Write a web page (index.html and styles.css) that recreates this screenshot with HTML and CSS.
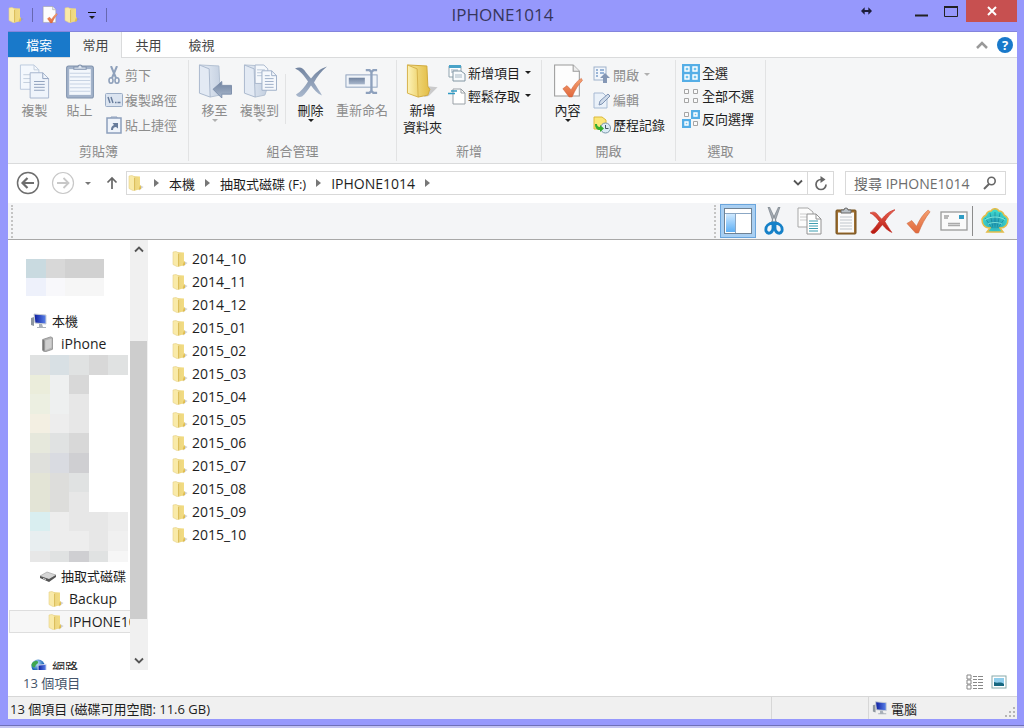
FILE: index.html
```html
<!DOCTYPE html>
<html lang="zh-Hant">
<head>
  <meta charset="UTF-8" />
  <title>IPHONE1014</title>
  <link rel="stylesheet" href="styles.css">
</head>
<body>

<!-- Icon sprite -->
<svg class="sprite" width="0" height="0" aria-hidden="true">
  <defs>
    <linearGradient id="gYellow"><stop offset="0" stop-color="#f7e79a"/><stop offset="1" stop-color="#e3bd45"/></linearGradient>
    <linearGradient id="gFlap"><stop offset="0" stop-color="#fdf3b8"/><stop offset="1" stop-color="#efd676"/></linearGradient>
    <linearGradient id="gSmall"><stop offset="0" stop-color="#e9d27c"/><stop offset="1" stop-color="#f3dd84"/></linearGradient>
    <linearGradient id="gGrey"><stop offset="0" stop-color="#e9eff7"/><stop offset="1" stop-color="#c3cfe0"/></linearGradient>
    <linearGradient id="gSteel" x2="0" y2="1"><stop offset="0" stop-color="#71839f"/><stop offset="1" stop-color="#a9b8cd"/></linearGradient>
    <linearGradient id="gScreen"><stop offset="0" stop-color="#0a1a9c"/><stop offset="1" stop-color="#5b83ea"/></linearGradient>
    <linearGradient id="gPane" x2="0" y2="1"><stop offset="0" stop-color="#cfe9ff"/><stop offset="1" stop-color="#5fb0f5"/></linearGradient>
    <linearGradient id="gCheck" x2="0" y2="1"><stop offset="0" stop-color="#f5a070"/><stop offset="1" stop-color="#e0683c"/></linearGradient>
    <linearGradient id="gRed" x2="0" y2="1"><stop offset="0" stop-color="#e8604e"/><stop offset="1" stop-color="#b51710"/></linearGradient>
    <radialGradient id="gShell" cy=".6"><stop offset="0" stop-color="#2093b4"/><stop offset="1" stop-color="#3fd8cc"/></radialGradient>
    <radialGradient id="gGlobe" cx=".4" cy=".3"><stop offset="0" stop-color="#c8ecff"/><stop offset="1" stop-color="#1c66b8"/></radialGradient>
  </defs>

  <symbol id="folder" viewBox="0 0 34 36">
    <path d="M22 23l10 1-9 9-5 1z" fill="#8a8a8a" opacity=".4"/>
    <path d="M1 1l20 1 1 21 2 3-2 6-10 2z" fill="url(#gYellow)" stroke="#cfa93c"/>
    <path d="M1 1l10 4 1 29-11-4z" fill="url(#gFlap)" stroke="#d6b24a"/>
  </symbol>
  <symbol id="folder-sm" viewBox="0 0 16 16">
    <path d="M11 9.500l4.500 2.500-4.500 3.500z" fill="#999" opacity=".45"/>
    <path d="M3 1l9 .5v8.500l1 1v3l-6 1.500z" fill="url(#gSmall)"/>
    <path d="M1 1l3-.5 3 1.500v13.500l-1.500.3L1 13.500z" fill="#f9eaa8" stroke="#e6d088" stroke-width=".6"/>
    <path d="M6 2.500l1 .5v12.500l-1-.5z" fill="#dcbf5c"/>
    <path d="M12 10.500l1 1v2.500l-2.500.8z" fill="#e0bd50"/>
  </symbol>
  <symbol id="moveto" viewBox="0 0 34 36">
    <path d="M1 1l20 1 1 21 2 3-2 6-10 2z" fill="url(#gGrey)" stroke="#b3c0d2"/>
    <path d="M1 1l10 4 1 29-11-4z" fill="#e3eaf4" stroke="#a9b8cc"/>
    <path d="M15 26l9-8v4h10v9H24v4z" fill="url(#gSteel)" stroke="#7e90ab"/>
  </symbol>
  <symbol id="copyto" viewBox="0 0 34 36">
    <path d="M1 1l20 1 1 21 2 3-2 6-10 2z" fill="url(#gGrey)" stroke="#b3c0d2"/>
    <path d="M12 1h9l4 4v15H12z" fill="#f5f8fc" stroke="#a9b8cc"/>
    <path d="M14 6h8M14 9h8M14 12h8" stroke="#b9c6d8"/>
    <path d="M1 1l10 4 1 29-11-4z" fill="#e3eaf4" stroke="#a9b8cc"/>
    <path d="M19 7h10l5 5v15H19z" fill="#f5f8fc" stroke="#9fb0c8"/>
    <path d="M29 7v5h5M22 12h5M22 15h9M22 18h9M22 21h9M22 24h9" fill="none" stroke="#9fb0c8"/>
  </symbol>
  <symbol id="copy" viewBox="0 0 32 36">
    <path d="M1 1h14l5 5v20H1z" fill="#f4f8fd" stroke="#bccade"/>
    <path d="M15 1v5h5M4 11h9M4 15h8M4 19h8" fill="none" stroke="#c3cedd"/>
    <path d="M11 9h13l6 6v20H11z" fill="#eff4fb" stroke="#a6b5cd"/>
    <path d="M24 9v6h6M15 18h11M15 21h11M15 24h11M15 27h11" fill="none" stroke="#8fa1bd"/>
  </symbol>
  <symbol id="paste" viewBox="0 0 28 34">
    <rect x="1" y="2" width="26" height="31" rx="2" fill="#a3b3ca" stroke="#8193ae"/>
    <path d="M3.500 5h21v25h-21z" fill="#f3f7fc"/>
    <path d="M4 9h20M4 12.500h20M4 16h20M4 19.500h20M4 23h20M4 26.500h20" stroke="#c7d3e3"/>
    <path d="M8 5V3h4a2 2 0 014 0h4v2z" fill="#dde5ef" stroke="#8193ae"/>
  </symbol>
  <symbol id="cut" viewBox="0 0 16 18">
    <path d="M5 0l5 12M11 0L6 12" stroke="#8fa1bb" stroke-width="2"/>
    <ellipse cx="5" cy="14.500" rx="2" ry="2.700" fill="none" stroke="#8fa1bb" stroke-width="1.600"/>
    <ellipse cx="11" cy="14.500" rx="2" ry="2.700" fill="none" stroke="#8fa1bb" stroke-width="1.600"/>
  </symbol>
  <symbol id="path" viewBox="0 0 18 14">
    <rect x=".5" y=".5" width="17" height="13" rx="1" fill="#dbe4f0" stroke="#9badc6"/>
    <path d="M3 4l2 6M6 4l2 6M10 9.500h1.500M12.500 9.500h3" stroke="#667b9b" stroke-width="1.400"/>
  </symbol>
  <symbol id="shortcut" viewBox="0 0 16 18">
    <rect x="1" y="2" width="14" height="15" fill="#eef3fa" stroke="#8c9fbc" stroke-width="1.500"/>
    <path d="M5 2V1h6v1" stroke="#8c9fbc" fill="none"/>
    <path d="M5 14c0-3 1-4 3-5L6.500 7H12v5.500L10 11c-2 0-3 1-3 3z" fill="#667b9b"/>
  </symbol>
  <symbol id="delete" viewBox="0 0 34 32">
    <path d="M1 3c5-2 8-1 11 4l5 6C21 8 26 3 33 1c-6 5-10 10-13 16 3 5 6 9 8 13-5-2-8-6-11-10C14 24 11 29 8 31c-3 1-5 0-6-2 5-3 9-8 12-13C10 10 6 5 1 3z" fill="url(#gSteel)"/>
  </symbol>
  <symbol id="rename" viewBox="0 0 36 28">
    <rect x="1" y="7" width="33" height="13" fill="#f0f4f9" stroke="#8ea1bd"/>
    <rect x="4" y="10" width="17" height="7" fill="url(#gSteel)"/>
    <path d="M22 2h4l2 2 2-2h4M28 4v20M22 26h4l2-2 2 2h4" fill="none" stroke="#8ea1bd" stroke-width="2.500"/>
  </symbol>
  <symbol id="newitem" viewBox="0 0 18 18">
    <path d="M1 2h12v11H1z" fill="#fff" stroke="#8fa3ae"/>
    <path d="M1 1h12v3H1z" fill="#4aa3c8"/>
    <path d="M3 6h7M3 8h7" stroke="#9ab"/>
    <path d="M5 7h8l4 3v7H5z" fill="#f7fafc" stroke="#8296a3"/>
    <path d="M7 11h7M7 13h7" stroke="#a8b8c4"/>
  </symbol>
  <symbol id="easy" viewBox="0 0 18 18">
    <path d="M5 2h8l4 4v11H5z" fill="#fff" stroke="#9aa1a7"/>
    <path d="M13 2v4h4" fill="none" stroke="#9aa1a7"/>
    <path d="M3 4h6M0 6.500h7" stroke="#2f9ac4" stroke-width="1.500"/>
  </symbol>
  <symbol id="props" viewBox="0 0 30 34">
    <path d="M2 1h18l6 6v24H2z" fill="#fdfdfd" stroke="#9a9a9a"/>
    <path d="M20 1v6h6" fill="#eee" stroke="#9a9a9a"/>
    <path d="M10 24l4-3 4 4c3-5 6-9 10-11l1 2c-4 4-7 9-10 16h-3z" fill="url(#gCheck)" stroke="#cc5f38" stroke-width=".5"/>
  </symbol>
  <symbol id="open" viewBox="0 0 18 18">
    <rect x="1" y="1" width="12" height="13" fill="#f2f6fb" stroke="#9fb2cc"/>
    <path d="M3 4h2M7 4h4M3 7h2M7 7h4M3 10h2" stroke="#7ea0cb" stroke-width="1.500"/>
    <path d="M12 7l5 5h-3v5h-4v-5H7z" fill="#8497b5"/>
  </symbol>
  <symbol id="edit" viewBox="0 0 18 18">
    <path d="M1 2h9l4 4v11H1z" fill="#eaf1f9" stroke="#a7bad3"/>
    <path d="M6 14l1-4 8-7 2 2-8 8z" fill="#cfdbea" stroke="#7f93b3"/>
  </symbol>
  <symbol id="history" viewBox="0 0 18 18">
    <path d="M1 1h8l4 3v9H1z" fill="#fbe779" stroke="#dcb93d"/>
    <circle cx="12.500" cy="12" r="5" fill="#dcecf5" stroke="#7795a8"/>
    <path d="M12.500 9v3.500h3" fill="none" stroke="#456"/>
    <path d="M2 8c0 4 2 6 5 6v2l4-3.500L7 9v2c-2 0-3-1-3-3z" fill="#36ad2f"/>
  </symbol>
  <symbol id="selall" viewBox="0 0 18 18">
    <path d="M0 0h18v18H0z" fill="#55aee6"/>
    <path d="M3 3h4v4H3zM11 3h4v4h-4zM3 11h4v4H3zM11 11h4v4h-4z" fill="#6fc3ee" stroke="#fff" stroke-width="1.400"/>
  </symbol>
  <symbol id="selnone" viewBox="0 0 18 18">
    <path d="M2.500 2.500h4v4h-4zM11.500 2.500h4v4h-4zM2.500 11.500h4v4h-4zM11.500 11.500h4v4h-4z" fill="#fafafa" stroke="#a5a5a5"/>
  </symbol>
  <symbol id="selinv" viewBox="0 0 18 18">
    <path d="M9 0h9v9H9zM0 9h9v9H0z" fill="#55aee6"/>
    <path d="M12 3h3v3h-3zM3 12h3v3H3z" fill="#6fc3ee" stroke="#fff" stroke-width="1.400"/>
    <path d="M2.500 2.500h4v4h-4zM11.500 11.500h4v4h-4z" fill="#fafafa" stroke="#a5a5a5"/>
  </symbol>
  <symbol id="back" viewBox="0 0 24 24">
    <circle cx="12" cy="12" r="10.500" fill="none" stroke="currentColor" stroke-width="1.500"/>
    <path d="M18 12H7M11.500 7l-5 5 5 5" fill="none" stroke="currentColor" stroke-width="2.200"/>
  </symbol>
  <symbol id="forward" viewBox="0 0 24 24">
    <circle cx="12" cy="12" r="10.500" fill="none" stroke="currentColor" stroke-width="1.200"/>
    <path d="M6 12h11M12.500 7l5 5-5 5" fill="none" stroke="currentColor" stroke-width="1.800"/>
  </symbol>
  <symbol id="up" viewBox="0 0 12 14">
    <path d="M6 13V2M1.500 6.500L6 2l4.500 4.500" fill="none" stroke="#666" stroke-width="1.700"/>
  </symbol>
  <symbol id="chev-down" viewBox="0 0 10 8"><path d="M1 1.500l4 4 4-4" fill="none" stroke="#555" stroke-width="1.800"/></symbol>
  <symbol id="chev-up" viewBox="0 0 10 8"><path d="M1 6.500l4-4 4 4" fill="none" stroke="#555" stroke-width="1.800"/></symbol>
  <symbol id="refresh" viewBox="0 0 14 15">
    <path d="M7 3.500a5 5 0 105 5" fill="none" stroke="#666" stroke-width="1.700"/>
    <path d="M6.500 0l5 3.500-5 3.500z" fill="#666"/>
  </symbol>
  <symbol id="search" viewBox="0 0 14 14">
    <circle cx="8.500" cy="5" r="3.700" fill="none" stroke="#666" stroke-width="1.600"/>
    <path d="M6 8l-5 5" stroke="#666" stroke-width="2"/>
  </symbol>
  <symbol id="layout" viewBox="0 0 28 26">
    <rect x=".5" y=".5" width="27" height="25" fill="#fff" stroke="#6f8294"/>
    <path d="M2 6h9v18H2z" fill="url(#gPane)"/>
    <path d="M1 5.500h26M11.500 5v20" stroke="#8ba7c4"/>
  </symbol>
  <symbol id="cut-lg" viewBox="0 0 20 28">
    <path d="M4 0l1.500 0 7 15-3 1zM16 0l-1.500 0-7 15 3 1z" fill="#a4abb3" stroke="#6d757d" stroke-width=".6"/>
    <path d="M9 16c-4 0-8 3-7 8 2 4 7 2 7-3zM11 16c4 0 8 3 7 8-2 4-7 2-7-3z" fill="none" stroke="#1681c8" stroke-width="2.800"/>
  </symbol>
  <symbol id="copy-lg" viewBox="0 0 26 28">
    <path d="M1 1h10l5 4v15H1z" fill="#fcfcfc" stroke="#a7a7a7"/>
    <path d="M3 7h7M3 10h7M3 13h7" stroke="#ccc"/>
    <path d="M10 7h9l5 5v15H10z" fill="#fff" stroke="#929292"/>
    <path d="M19 7v5h5" fill="none" stroke="#929292"/>
    <path d="M12 14h9M12 16.500h9M12 19h9M12 21.500h9M12 24h9" stroke="#3c9db0"/>
  </symbol>
  <symbol id="paste-lg" viewBox="0 0 22 28">
    <rect x="1" y="3" width="20" height="24" rx="1" fill="#9c6d2f" stroke="#73501f"/>
    <path d="M3 5.500h16v20H3z" fill="#fafafa"/>
    <path d="M5 10h12M5 13h12M5 16h12M5 19h12M5 22h12" stroke="#c0c6cc"/>
    <path d="M6 6V3h3a2 2 0 014 0h3v3z" fill="#b9c0c6" stroke="#666"/>
  </symbol>
  <symbol id="delete-lg" viewBox="0 0 34 32">
    <path d="M1 5c5-2 8-1 11 4l4 4C21 7 27 2 33 1c-6 5-10 10-13 15 3 5 6 10 9 14-5-2-9-6-12-10C13 24 10 29 7 31c-3 1-4 0-5-2 5-4 8-9 11-13C9 11 6 7 1 5z" fill="url(#gRed)" stroke="#c42a1e" stroke-width=".8"/>
  </symbol>
  <symbol id="check-lg" viewBox="0 0 26 26">
    <path d="M1 15l5-3 5 6C14 11 18 5 23 1l2 2C20 9 16 17 13 25h-3z" fill="url(#gCheck)" stroke="#cc6a44" stroke-width=".6"/>
  </symbol>
  <symbol id="mail-lg" viewBox="0 0 28 20">
    <rect x="1" y="1" width="26" height="18" fill="#fafafa" stroke="#9a9a9a" stroke-width="1.300"/>
    <rect x="19" y="4" width="5" height="4" fill="#2f9cc4"/>
    <path d="M4 5h5M4 7h4" stroke="#777"/>
    <path d="M8 12.500h12M8 14.500h12" stroke="#aaa" stroke-width="1.500"/>
  </symbol>
  <symbol id="shell" viewBox="0 0 28 26">
    <path d="M9 20C3 20 1 16 1 11c1-2 2-3 4-4 1-3 3-4 5-4 2-3 6-3 8 0 2 0 4 1 5 4 2 1 3 2 4 4 0 5-2 9-8 9l3 4H6z" fill="url(#gShell)" stroke="#e3bd4c" stroke-width="1.600"/>
    <path d="M14 20V4M12 20L9 5M16 20l3-15M11 20L4 10M17 20l7-10" fill="none" stroke="#127f90" stroke-width=".6"/>
    <path d="M4 12c5-4 15-4 20 0M7 16c4-2 10-2 14 0" fill="none" stroke="#8ff0df" stroke-width=".8"/>
  </symbol>
  <symbol id="computer" viewBox="0 0 18 16">
    <path d="M1 5l3-1v9l-3-1z" fill="#8e979f"/>
    <path d="M4 1l12 1v9L5 10z" fill="url(#gScreen)" stroke="#c9ced4"/>
    <path d="M9 11h3l1 3h3v1H7v-1h2z" fill="#a9b0b8"/>
  </symbol>
  <symbol id="phone" viewBox="0 0 16 18">
    <path d="M2 4l9-3 2 1v13l-9 3-2-2z" fill="#b4b4b4" stroke="#8f8f8f"/>
    <path d="M5 5l7-2v10l-7 3z" fill="#cfcfcf"/>
    <path d="M2 4l2 1v12l-2-1z" fill="#777"/>
  </symbol>
  <symbol id="drive" viewBox="0 0 18 12">
    <path d="M1 6l7-4 9 3-7 5z" fill="#d5d5d5" stroke="#999" stroke-width=".6"/>
    <path d="M1 6l9 3 7-4v2l-7 5-9-4z" fill="#555"/>
    <path d="M4 8.500l3 1" stroke="#ddd"/>
  </symbol>
  <symbol id="network" viewBox="0 0 18 18">
    <circle cx="8" cy="8" r="7.500" fill="url(#gGlobe)"/>
    <path d="M3 3c3-2 5-1 5 1s-3 2-3 4-3 2-4 0 0-4 2-5z" fill="#3fa650"/>
    <path d="M8 7l9-1v7l-9 1z" fill="url(#gScreen)" stroke="#dde"/>
  </symbol>
  <symbol id="details" viewBox="0 0 18 16">
    <path d="M1 1h4v4H1zM1 6h4v4H1zM1 11h4v4H1z" fill="#fff" stroke="#888"/>
    <path d="M7 2.500h4M12 2.500h5M7 5.500h4M12 5.500h5M7 8.500h4M12 8.500h5M7 11.500h4M12 11.500h5M7 14.500h4M12 14.500h5" stroke="#888"/>
  </symbol>
  <symbol id="thumbs" viewBox="0 0 16 14">
    <rect x="1" y="1" width="14" height="12" fill="#fff" stroke="#8aa"/>
    <path d="M3 3h10v8H3z" fill="#8fcdeb"/>
    <path d="M3 7c4 2 6-1 10 2v2H3z" fill="#17677f"/>
  </symbol>
</svg>

<div class="window">

  <header class="titlebar">
    <div class="quick">
      <svg class="i16"><use href="#folder-sm"/></svg>
      <span class="bar"></span>
      <button aria-label="內容"><svg class="i18"><use href="#props"/></svg></button>
      <button aria-label="新增資料夾"><svg class="i16"><use href="#folder-sm"/></svg></button>
      <button class="customize" aria-label="自訂"><span class="caret"></span></button>
      <span class="bar"></span>
    </div>
    <h1 class="title">IPHONE1014</h1>
    <div class="controls">
      <svg class="resize" viewBox="0 0 12 8"><path d="M0 4l4-4v3h4V0l4 4-4 4V5H4v3z" fill="#1d1d3a"/></svg>
      <button class="control" aria-label="最小化"><svg width="13" height="12"><path d="M0 10.500h13" stroke="#222" stroke-width="2"/></svg></button>
      <button class="control" aria-label="最大化"><svg width="14" height="12"><path d="M.5 1v10.500h13V1" fill="none" stroke="#222"/><path d="M0 2h14" stroke="#222" stroke-width="2"/></svg></button>
      <button class="control close" aria-label="關閉"><svg width="10" height="10"><path d="M1 1l8 8M9 1L1 9" stroke="#fff" stroke-width="2"/></svg></button>
    </div>
  </header>

  <nav class="tabs">
    <button class="tab file">檔案</button>
    <button class="tab active">常用</button>
    <button class="tab">共用</button>
    <button class="tab">檢視</button>
    <div class="tabs-right">
      <button aria-label="最小化功能區"><svg width="12" height="8"><path d="M1 7l5-5 5 5" fill="none" stroke="#999" stroke-width="2.500"/></svg></button>
      <button class="help" aria-label="說明">?</button>
    </div>
  </nav>

  <section class="ribbon">
    <div class="group clipboard">
      <div class="tools">
        <button class="big" disabled><svg><use href="#copy"/></svg>複製</button>
        <button class="big" disabled><svg><use href="#paste"/></svg>貼上</button>
        <div class="stack tall">
          <button class="small" disabled><svg><use href="#cut"/></svg>剪下</button>
          <button class="small" disabled><svg><use href="#path"/></svg>複製路徑</button>
          <button class="small" disabled><svg><use href="#shortcut"/></svg>貼上捷徑</button>
        </div>
      </div>
      <div class="label">剪貼簿</div>
    </div>

    <div class="group organize">
      <div class="tools">
        <button class="big" disabled><svg><use href="#moveto"/></svg>移至<span class="caret"></span></button>
        <button class="big" disabled><svg><use href="#copyto"/></svg>複製到<span class="caret"></span></button>
        <span class="divider"></span>
        <button class="big"><svg><use href="#delete"/></svg>刪除<span class="caret"></span></button>
        <button class="big wide" disabled><svg><use href="#rename"/></svg>重新命名</button>
      </div>
      <div class="label">組合管理</div>
    </div>

    <div class="group new">
      <div class="tools">
        <button class="big"><svg><use href="#folder"/></svg>新增<br>資料夾</button>
        <div class="stack">
          <button class="small"><svg><use href="#newitem"/></svg>新增項目<span class="caret"></span></button>
          <button class="small"><svg><use href="#easy"/></svg>輕鬆存取<span class="caret"></span></button>
        </div>
      </div>
      <div class="label">新增</div>
    </div>

    <div class="group open">
      <div class="tools">
        <button class="big"><svg><use href="#props"/></svg>內容<span class="caret"></span></button>
        <div class="stack tall">
          <button class="small" disabled><svg><use href="#open"/></svg>開啟<span class="caret"></span></button>
          <button class="small" disabled><svg><use href="#edit"/></svg>編輯</button>
          <button class="small"><svg><use href="#history"/></svg>歷程記錄</button>
        </div>
      </div>
      <div class="label">開啟</div>
    </div>

    <div class="group select">
      <div class="tools">
        <div class="stack">
          <button class="small"><svg><use href="#selall"/></svg>全選</button>
          <button class="small"><svg><use href="#selnone"/></svg>全部不選</button>
          <button class="small"><svg><use href="#selinv"/></svg>反向選擇</button>
        </div>
      </div>
      <div class="label">選取</div>
    </div>
  </section>

  <section class="navbar">
    <button class="round" aria-label="上一頁"><svg><use href="#back"/></svg></button>
    <button class="round off" aria-label="下一頁" disabled><svg><use href="#forward"/></svg></button>
    <button class="recent" aria-label="最近的位置"><span class="caret"></span></button>
    <button class="up" aria-label="上移"><svg width="12" height="14"><use href="#up"/></svg></button>
    <div class="address">
      <svg class="i16"><use href="#folder-sm"/></svg>
      <span class="arrow"></span>
      <a href="#">本機</a>
      <span class="arrow"></span>
      <a href="#">抽取式磁碟 (F:)</a>
      <span class="arrow"></span>
      <a href="#" class="current">IPHONE1014</a>
      <span class="arrow"></span>
      <button class="history" aria-label="先前的位置"><svg width="10" height="8"><use href="#chev-down"/></svg></button>
      <button class="refresh" aria-label="重新整理"><svg width="14" height="15"><use href="#refresh"/></svg></button>
    </div>
    <div class="search">
      <input type="text" placeholder="搜尋 IPHONE1014" aria-label="搜尋">
      <svg width="14" height="14"><use href="#search"/></svg>
    </div>
  </section>

  <section class="toolbar">
    <span class="grip"></span>
    <div class="toolbar-buttons">
      <span class="grip"></span>
      <button class="tool pressed" aria-label="瀏覽窗格"><svg width="28" height="26"><use href="#layout"/></svg></button>
      <button class="tool" aria-label="剪下"><svg width="20" height="28"><use href="#cut-lg"/></svg></button>
      <button class="tool" aria-label="複製"><svg width="26" height="28"><use href="#copy-lg"/></svg></button>
      <button class="tool" aria-label="貼上"><svg width="22" height="28"><use href="#paste-lg"/></svg></button>
      <button class="tool" aria-label="刪除"><svg width="27" height="25"><use href="#delete-lg"/></svg></button>
      <button class="tool" aria-label="內容"><svg width="25" height="25"><use href="#check-lg"/></svg></button>
      <button class="tool" aria-label="電子郵件"><svg width="28" height="20"><use href="#mail-lg"/></svg></button>
      <span class="rule"></span>
      <button class="tool" aria-label="Shell"><svg width="28" height="26"><use href="#shell"/></svg></button>
    </div>
  </section>

  <main class="content">
    <aside class="sidebar">
      <div class="tree">
        <!-- blurred favourites -->
        <div class="mosaic fav">
          <i class="c1"></i><i class="c2"></i><i class="c3"></i><i class="c3"></i>
          <i class="c4"></i><i class="c5"></i><i class="c6"></i><i class="c6"></i>
        </div>
        <a href="#" class="node"><svg><use href="#computer"/></svg>本機</a>
        <a href="#" class="node level1 latin"><svg><use href="#phone"/></svg>iPhone</a>
        <!-- blurred drives -->
        <div class="mosaic drives">
          <i class="c7"></i><i class="c8"></i><i class="c7"></i><i class="c2"></i><i class="c7"></i>
          <i class="y1"></i><i class="c9"></i><i class="c2"></i><i></i><i></i>
          <i class="y2"></i><i class="c9"></i><i class="g1"></i><i></i><i></i>
          <i class="y3"></i><i class="g2"></i><i class="g1"></i><i></i><i></i>
          <i class="y4"></i><i class="c7"></i><i class="c2"></i><i></i><i></i>
          <i class="g3"></i><i class="g4"></i><i class="g5"></i><i></i><i></i>
          <i class="y5"></i><i class="g6"></i><i class="c7"></i><i></i><i></i>
          <i class="y5"></i><i class="g6"></i><i class="g1"></i><i></i><i></i>
          <i class="b1"></i><i class="g2"></i><i class="g1"></i><i class="g1"></i><i class="g2"></i>
          <i class="b2"></i><i class="g2"></i><i class="g2"></i><i class="g1"></i><i class="g7"></i>
          <i class="g1"></i><i class="c7"></i><i class="g5"></i><i class="c7"></i><i class="c6"></i>
        </div>
        <a href="#" class="node level1"><svg><use href="#drive"/></svg>抽取式磁碟</a>
        <a href="#" class="node level2 latin"><svg><use href="#folder-sm"/></svg>Backup</a>
        <a href="#" class="node level2 latin selected"><svg><use href="#folder-sm"/></svg>IPHONE1014</a>
        <a href="#" class="node net"><svg><use href="#network"/></svg>網路</a>
      </div>
      <div class="scrollbar">
        <button aria-label="向上捲動"><svg width="10" height="8"><use href="#chev-up"/></svg></button>
        <div class="track"><div class="thumb"></div></div>
        <button aria-label="向下捲動"><svg width="10" height="8"><use href="#chev-down"/></svg></button>
      </div>
    </aside>

    <ul class="files">
      <li><a href="#"><svg class="i16"><use href="#folder-sm"/></svg>2014_10</a></li>
      <li><a href="#"><svg class="i16"><use href="#folder-sm"/></svg>2014_11</a></li>
      <li><a href="#"><svg class="i16"><use href="#folder-sm"/></svg>2014_12</a></li>
      <li><a href="#"><svg class="i16"><use href="#folder-sm"/></svg>2015_01</a></li>
      <li><a href="#"><svg class="i16"><use href="#folder-sm"/></svg>2015_02</a></li>
      <li><a href="#"><svg class="i16"><use href="#folder-sm"/></svg>2015_03</a></li>
      <li><a href="#"><svg class="i16"><use href="#folder-sm"/></svg>2015_04</a></li>
      <li><a href="#"><svg class="i16"><use href="#folder-sm"/></svg>2015_05</a></li>
      <li><a href="#"><svg class="i16"><use href="#folder-sm"/></svg>2015_06</a></li>
      <li><a href="#"><svg class="i16"><use href="#folder-sm"/></svg>2015_07</a></li>
      <li><a href="#"><svg class="i16"><use href="#folder-sm"/></svg>2015_08</a></li>
      <li><a href="#"><svg class="i16"><use href="#folder-sm"/></svg>2015_09</a></li>
      <li><a href="#"><svg class="i16"><use href="#folder-sm"/></svg>2015_10</a></li>
    </ul>
  </main>

  <div class="summary">
    <span>13 個項目</span>
    <div class="views">
      <button aria-label="詳細資料"><svg width="18" height="16"><use href="#details"/></svg></button>
      <button aria-label="大圖示"><svg width="16" height="14"><use href="#thumbs"/></svg></button>
    </div>
  </div>

  <footer class="status">
    <span class="cell info">13 個項目 (磁碟可用空間: 11.6 GB)</span>
    <span class="cell blank"></span>
    <span class="cell zone"><svg class="i16"><use href="#computer"/></svg>電腦
      <svg class="sizer" width="10" height="10"><path d="M8 0h2v2H8zM4 4h2v2H4zM8 4h2v2H8zM0 8h2v2H0zM4 8h2v2H4zM8 8h2v2H8z" fill="#b5b5b5"/></svg>
    </span>
  </footer>
</div>

</body>
</html>
```

FILE: styles.css
```css
* {
  box-sizing: border-box;
}

body {
  margin: 0;
  height: 100vh;
  padding-bottom: 2px;
  background: #c4c4f2;
  font-family: "Open Sans", "Noto Sans CJK TC", sans-serif;
  font-size: 13px;
  color: #1e1e1e;
  overflow: hidden;
}

button {
  font: inherit;
  color: inherit;
  background: none;
  border: none;
  padding: 0;
  cursor: pointer;
}

a {
  color: inherit;
  text-decoration: none;
}

svg {
  flex: none;
  display: block;
}

.sprite {
  position: absolute;
}

.i16 {
  width: 16px;
  height: 16px;
}

.i18 {
  width: 18px;
  height: 18px;
}

.caret {
  flex: none;
  border: 3px solid transparent;
  border-top-color: currentColor;
  border-bottom: 0;
}

.window {
  height: 100%;
  display: flex;
  flex-direction: column;
  background: #9698fc;
  padding: 0 7px 6px 8px;
  border-bottom: 1px solid #6f70b8;
}

/* Title bar */
.titlebar {
  flex: none;
  height: 32px;
  display: flex;
  align-items: flex-start;
  border-bottom: 1px solid #8485dc;
}

.quick {
  width: 136px;
  height: 30px;
  display: flex;
  align-items: center;
  gap: 5px;
}

.quick .bar {
  width: 1px;
  height: 14px;
  margin: 0 3px;
  background: #6768b0;
}

.quick .customize {
  width: 8px;
  height: 7px;
  margin: 0 2px 0 3px;
  border-top: 1px solid #111;
  display: flex;
  justify-content: center;
  align-items: flex-end;
}

.title {
  flex: 1;
  margin: 0;
  text-align: center;
  font-size: 17px;
  font-weight: normal;
  line-height: 30px;
  color: #36365c;
}

.controls {
  display: flex;
}

.resize {
  width: 11px;
  height: 8px;
  margin: 7px 34px 0 0;
}

.control {
  width: 30px;
  height: 22px;
  display: flex;
  align-items: center;
  justify-content: center;
}

.control.close {
  width: 51px;
  background: #c75050;
}

/* Tabs */
.tabs {
  flex: none;
  height: 26px;
  display: flex;
  background: #fff;
  border-bottom: 1px solid #dadbdc;
}

.tab {
  width: 53px;
  height: 26px;
  line-height: 24px;
  color: #444;
}

.tab.file {
  width: 62px;
  height: 25px;
  background: #1979ca;
  color: #fff;
}

.tab.active {
  width: 52px;
  background: #f5f6f7;
  border-right: 1px solid #dadbdc;
}

.tabs-right {
  margin-left: auto;
  padding-right: 4px;
  display: flex;
  align-items: center;
  gap: 9px;
}

.help {
  width: 16px;
  height: 16px;
  border-radius: 50%;
  background: #1979ca;
  color: #fff;
  font-weight: bold;
  line-height: 16px;
}

/* Ribbon */
.ribbon {
  flex: none;
  height: 106px;
  display: flex;
  background: #f5f6f7;
  border-bottom: 1px solid #dadbdc;
  padding: 2px 0;
}

.group {
  display: flex;
  flex-direction: column;
  border-right: 1px solid #e2e3e4;
  padding: 1px 3px 0;
}

.clipboard { width: 181px; padding-left: 4px; }
.organize { width: 208px; }
.new { width: 145px; }
.open { width: 134px; }
.select { width: 90px; }

.tools {
  flex: 1;
  display: flex;
  align-items: flex-start;
}

.label {
  text-align: center;
  color: #8a8a8a;
  line-height: 20px;
}

.big {
  width: 45px;
  display: flex;
  flex-direction: column;
  align-items: center;
  line-height: 17px;
  white-space: nowrap;
}

.big svg {
  width: 34px;
  height: 35px;
  margin: 3px 0;
}

.big.wide {
  width: 58px;
}

.big:disabled,
.small:disabled {
  color: #8d8d8d;
}

.big:disabled .caret,
.small:disabled .caret {
  border-top-color: #b0b0b0;
}

.divider {
  width: 1px;
  height: 50px;
  margin: 13px 2px 0 3px;
  background: #e2e3e4;
}

.stack {
  display: flex;
  flex-direction: column;
  padding-left: 3px;
}

.stack.tall {
  padding-top: 1px;
}

.small {
  height: 23px;
  display: flex;
  align-items: center;
  gap: 2px;
  white-space: nowrap;
}

.stack.tall .small {
  height: 25px;
}

.small svg {
  width: 18px;
  height: 18px;
}

.small .caret {
  margin-left: 3px;
}

/* Navigation bar */
.navbar {
  flex: none;
  height: 39px;
  display: flex;
  align-items: center;
  padding: 0 11px 1px 8px;
  background: #fff;
}

.round {
  color: #6e6e6e;
}

.round svg {
  width: 24px;
  height: 24px;
}

.round.off {
  margin-left: 11px;
  color: #c8c8c8;
}

.recent {
  width: 26px;
  display: flex;
  justify-content: center;
  color: #777;
}

.up {
  margin: 0 8px 0 5px;
}

.address {
  flex: 1;
  height: 24px;
  display: flex;
  align-items: center;
  border: 1px solid #d9d9d9;
  padding-left: 1px;
}

.arrow {
  margin: 0 10px;
  border: 4px solid transparent;
  border-left: 5px solid #777;
  border-right: 0;
}

.current {
  font-size: 14px;
}

.history {
  margin-left: auto;
  padding: 0 4px;
}

.refresh {
  align-self: stretch;
  width: 26px;
  display: flex;
  align-items: center;
  justify-content: center;
  border-left: 1px solid #d9d9d9;
}

.search {
  width: 161px;
  height: 24px;
  margin-left: 11px;
  padding: 0 8px;
  display: flex;
  align-items: center;
  border: 1px solid #d9d9d9;
}

.search input {
  flex: 1;
  min-width: 0;
  border: none;
  outline: none;
  padding: 0;
  background: none;
  font: inherit;
  font-size: 14px;
}

.search input::placeholder {
  color: #6d6d6d;
}

/* Toolbar */
.toolbar {
  flex: none;
  height: 37px;
  display: flex;
  justify-content: space-between;
  align-items: center;
  padding: 0 4px 0 3px;
  background: #f4f5f7;
  border-bottom: 1px solid #a8a8a8;
}

.toolbar-buttons {
  display: flex;
  align-items: center;
}

.grip {
  height: 33px;
  border-left: 2px dotted #c4c4c4;
}

.toolbar-buttons .grip {
  margin-right: 4px;
}

.tool {
  width: 36px;
  height: 34px;
  display: flex;
  align-items: center;
  justify-content: center;
}

.tool.pressed {
  background: #a9cff2;
  border: 1px solid #6aa5dc;
}

.rule {
  width: 1px;
  height: 30px;
  background: #8c8c8c;
  margin-right: 4px;
}

/* Content */
.content {
  flex: 1;
  min-height: 0;
  display: flex;
  background: #fff;
}

.sidebar {
  width: 140px;
  display: flex;
  border-right: 1px solid #f0f0f0;
}

.tree {
  flex: 1;
  min-width: 0;
  padding-top: 19px;
  overflow: hidden;
}

.node {
  height: 23px;
  display: flex;
  align-items: center;
  gap: 4px;
  padding-left: 22px;
  white-space: nowrap;
}

.node svg {
  width: 18px;
  height: 16px;
}

.node.level1 {
  padding-left: 31px;
}

.node.level2 {
  padding-left: 39px;
}

.node.latin {
  font-size: 14px;
}

.node.selected {
  margin-left: 1px;
  padding-left: 37px;
  background: #f7f7f7;
  border: 1px solid #dedede;
  border-right: none;
}

.node.net {
  margin-top: 22px;
}

.mosaic {
  display: grid;
}

.mosaic.fav {
  width: 78px;
  height: 37px;
  margin: 0 0 13px 18px;
  grid-template-columns: repeat(4, 1fr);
}

.mosaic.drives {
  width: 98px;
  height: 207px;
  margin: 0 0 2px 22px;
  grid-template-columns: repeat(5, 1fr);
  grid-template-rows: repeat(10, 1fr) 11px;
}

.c1 { background: #c9dae0; }
.c2 { background: #d8d8d8; }
.c3 { background: #d1d1d1; }
.c4 { background: #eef1fb; }
.c5 { background: #f8f8fb; }
.c6 { background: #f6f6f6; }
.c7 { background: #e0e2e2; }
.c8 { background: #d8e0e4; }
.c9 { background: #eef0f0; }
.y1 { background: #ebeddb; }
.y2 { background: #ecefe1; }
.y3 { background: #f3efe2; }
.y4 { background: #e6e8dc; }
.y5 { background: #e3e4d6; }
.g1 { background: #e7e7e7; }
.g2 { background: #ededed; }
.g3 { background: #dfe0dc; }
.g4 { background: #d9dbe1; }
.g5 { background: #cfcfd2; }
.g6 { background: #dddddb; }
.g7 { background: #f0f0f0; }
.b1 { background: #d9eef0; }
.b2 { background: #e8eef0; }

.scrollbar {
  width: 17px;
  display: flex;
  flex-direction: column;
  background: #f0f0f0;
}

.scrollbar button {
  height: 18px;
  display: flex;
  align-items: center;
  justify-content: center;
}

.track {
  flex: 1;
  padding: 83px 0 33px;
  display: flex;
}

.thumb {
  flex: 1;
  background: #cdcdcd;
}

.files {
  flex: 1;
  margin: 0;
  padding: 7px 0 0 24px;
  list-style: none;
  font-size: 14px;
}

.files a {
  height: 23px;
  display: inline-flex;
  align-items: center;
  gap: 4px;
}

.files li {
  height: 23px;
}

/* Summary and status bar */
.summary {
  flex: none;
  height: 26px;
  display: flex;
  align-items: center;
  justify-content: space-between;
  padding: 0 10px 2px 15px;
  background: #fff;
  color: #44546a;
}

.views {
  display: flex;
  align-items: center;
  gap: 7px;
}

.status {
  flex: none;
  height: 23px;
  display: flex;
  align-items: stretch;
  background: #f0f0f0;
  border-top: 1px solid #d7d7d7;
}

.cell {
  display: flex;
  align-items: center;
}

.info {
  flex: 1;
  padding-left: 2px;
}

.blank {
  width: 97px;
  border-left: 1px solid #d7d7d7;
}

.zone {
  width: 149px;
  border-left: 1px solid #d7d7d7;
  padding-left: 3px;
  gap: 3px;
}

.sizer {
  align-self: flex-end;
  margin: 0 2px 2px auto;
}
```
